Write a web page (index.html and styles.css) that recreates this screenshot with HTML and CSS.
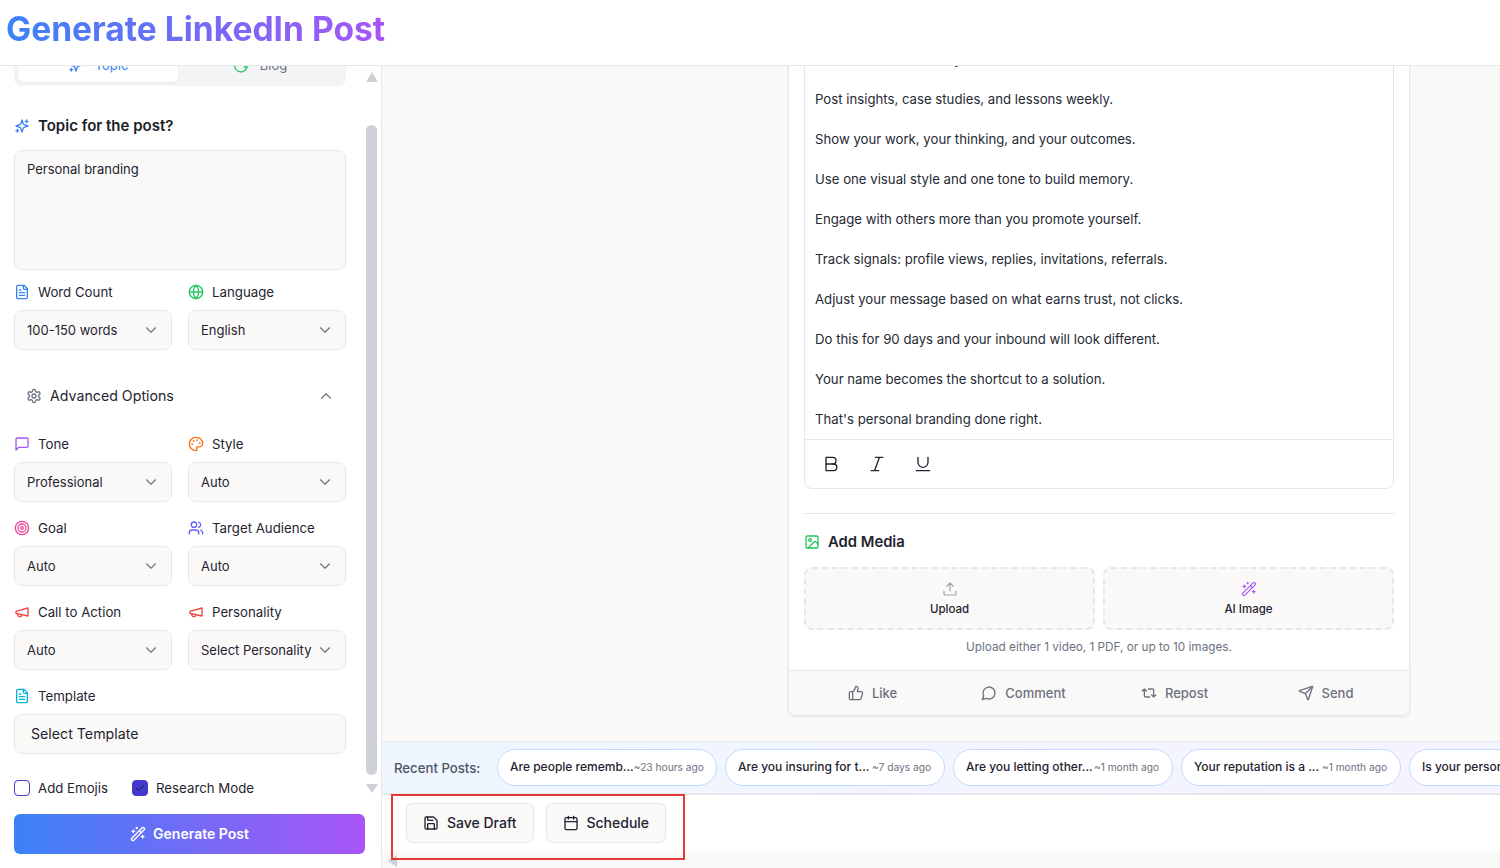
FILE: index.html
```html
<!DOCTYPE html>
<html lang="en">
<head>
<meta charset="utf-8">
<title>Generate LinkedIn Post</title>
<link rel="stylesheet" href="styles.css">
</head>
<body>
<svg class="sprite" xmlns="http://www.w3.org/2000/svg">
<symbol id="i-sparkles" viewBox="0 0 24 24"><g transform="translate(24 0) scale(-1 1)"><path d="m12 3-1.912 5.813a2 2 0 0 1-1.275 1.275L3 12l5.813 1.912a2 2 0 0 1 1.275 1.275L12 21l1.912-5.813a2 2 0 0 1 1.275-1.275L21 12l-5.813-1.912a2 2 0 0 1-1.275-1.275L12 3Z"/><path d="M5 3v4M19 17v4M3 5h4M17 19h4"/></g></symbol>
<symbol id="i-file" viewBox="0 0 24 24"><path d="M15 2H6a2 2 0 0 0-2 2v16a2 2 0 0 0 2 2h12a2 2 0 0 0 2-2V7Z"/><path d="M14 2v4a2 2 0 0 0 2 2h4M10 9H8M16 13H8M16 17H8"/></symbol>
<symbol id="i-globe" viewBox="0 0 24 24"><circle cx="12" cy="12" r="10"/><path d="M12 2a14.5 14.5 0 0 0 0 20 14.5 14.5 0 0 0 0-20M2 12h20"/></symbol>
<symbol id="i-gear" viewBox="0 0 24 24"><path d="M12.22 2h-.44a2 2 0 0 0-2 2v.18a2 2 0 0 1-1 1.73l-.43.25a2 2 0 0 1-2 0l-.15-.08a2 2 0 0 0-2.73.73l-.22.38a2 2 0 0 0 .73 2.73l.15.1a2 2 0 0 1 1 1.72v.51a2 2 0 0 1-1 1.74l-.15.09a2 2 0 0 0-.73 2.73l.22.38a2 2 0 0 0 2.73.73l.15-.08a2 2 0 0 1 2 0l.43.25a2 2 0 0 1 1 1.73V20a2 2 0 0 0 2 2h.44a2 2 0 0 0 2-2v-.18a2 2 0 0 1 1-1.73l.43-.25a2 2 0 0 1 2 0l.15.08a2 2 0 0 0 2.73-.73l.22-.39a2 2 0 0 0-.73-2.73l-.15-.08a2 2 0 0 1-1-1.74v-.5a2 2 0 0 1 1-1.74l.15-.09a2 2 0 0 0 .73-2.73l-.22-.38a2 2 0 0 0-2.73-.73l-.15.08a2 2 0 0 1-2 0l-.43-.25a2 2 0 0 1-1-1.73V4a2 2 0 0 0-2-2z"/><circle cx="12" cy="12" r="3"/></symbol>
<symbol id="i-message" viewBox="0 0 24 24"><path d="M21 15a2 2 0 0 1-2 2H7l-4 4V5a2 2 0 0 1 2-2h14a2 2 0 0 1 2 2z"/></symbol>
<symbol id="i-palette" viewBox="0 0 24 24"><circle cx="13.5" cy="6.5" r=".5"/><circle cx="17.5" cy="10.5" r=".5"/><circle cx="8.5" cy="7.5" r=".5"/><circle cx="6.5" cy="12.5" r=".5"/><path d="M12 2C6.5 2 2 6.5 2 12s4.5 10 10 10c.926 0 1.648-.746 1.648-1.688 0-.437-.18-.835-.437-1.125-.29-.289-.438-.652-.438-1.125a1.64 1.64 0 0 1 1.668-1.668h1.996c3.051 0 5.555-2.503 5.555-5.554C21.965 6.012 17.461 2 12 2z"/></symbol>
<symbol id="i-target" viewBox="0 0 24 24"><circle cx="12" cy="12" r="10"/><circle cx="12" cy="12" r="6"/><circle cx="12" cy="12" r="2"/></symbol>
<symbol id="i-users" viewBox="0 0 24 24"><path d="M16 21v-2a4 4 0 0 0-4-4H6a4 4 0 0 0-4 4v2"/><circle cx="9" cy="7" r="4"/><path d="M22 21v-2a4 4 0 0 0-3-3.87M16 3.13a4 4 0 0 1 0 7.75"/></symbol>
<symbol id="i-megaphone" viewBox="0 0 24 24"><path d="m3 11 18-5v12L3 14v-3z"/><path d="M11.6 16.8a3 3 0 1 1-5.8-1.6"/></symbol>
<symbol id="i-wand" viewBox="0 0 24 24"><path d="m21.64 3.64-1.28-1.28a1.21 1.21 0 0 0-1.72 0L2.36 18.64a1.21 1.21 0 0 0 0 1.72l1.28 1.28a1.2 1.2 0 0 0 1.72 0L21.64 5.36a1.2 1.2 0 0 0 0-1.72"/><path d="m14 7 3 3M5 6v4M19 14v4M10 2v2M7 8H3M21 16h-4M11 3H9"/></symbol>
<symbol id="i-check" viewBox="0 0 24 24"><path d="M20 6 9 17l-5-5"/></symbol>
<symbol id="i-save" viewBox="0 0 24 24"><path d="M15.2 3a2 2 0 0 1 1.4.6l3.8 3.8a2 2 0 0 1 .6 1.4V19a2 2 0 0 1-2 2H5a2 2 0 0 1-2-2V5a2 2 0 0 1 2-2z"/><path d="M17 21v-7a1 1 0 0 0-1-1H8a1 1 0 0 0-1 1v7M7 3v4a1 1 0 0 0 1 1h7"/></symbol>
<symbol id="i-calendar" viewBox="0 0 24 24"><path d="M8 2v4M16 2v4"/><rect x="3" y="4" width="18" height="18" rx="2"/><path d="M3 10h18"/></symbol>
<symbol id="i-thumb" viewBox="0 0 24 24"><path d="M7 10v12"/><path d="M15 5.88 14 10h5.83a2 2 0 0 1 1.92 2.56l-2.33 8A2 2 0 0 1 17.5 22H4a2 2 0 0 1-2-2v-8a2 2 0 0 1 2-2h2.76a2 2 0 0 0 1.79-1.11L12 2a3.13 3.13 0 0 1 3 3.88Z"/></symbol>
<symbol id="i-comment" viewBox="0 0 24 24"><path d="M7.9 20A9 9 0 1 0 4 16.1L2 22Z"/></symbol>
<symbol id="i-repeat" viewBox="0 0 24 24"><path d="m2 9 3-3 3 3M13 18H7a2 2 0 0 1-2-2V6M22 15l-3 3-3-3M11 6h6a2 2 0 0 1 2 2v10"/></symbol>
<symbol id="i-send" viewBox="0 0 24 24"><path d="M14.536 21.686a.5.5 0 0 0 .937-.024l6.5-19a.496.496 0 0 0-.635-.635l-19 6.5a.5.5 0 0 0-.024.937l7.93 3.18a2 2 0 0 1 1.112 1.11z"/><path d="m21.854 2.147-10.94 10.939"/></symbol>
<symbol id="i-upload" viewBox="0 0 24 24"><path d="M21 15v4a2 2 0 0 1-2 2H5a2 2 0 0 1-2-2v-4"/><path d="M17 8l-5-5-5 5M12 3v12"/></symbol>
<symbol id="i-image" viewBox="0 0 24 24"><rect x="3" y="3" width="18" height="18" rx="2"/><circle cx="9" cy="9" r="2"/><path d="m21 15-3.086-3.086a2 2 0 0 0-2.828 0L6 21"/></symbol>
<symbol id="i-bold" viewBox="0 0 24 24"><path d="M14 12a4 4 0 0 0 0-8H6v8"/><path d="M15 20a4 4 0 0 0 0-8H6v8Z"/></symbol>
<symbol id="i-italic" viewBox="0 0 24 24"><path d="M19 4h-9M14 20H5M15 4 9 20"/></symbol>
<symbol id="i-underline" viewBox="0 0 24 24"><path d="M6 4v6a6 6 0 0 0 12 0V4M4 20h16"/></symbol>
<symbol id="i-down" viewBox="0 0 24 24"><path d="m6 9 6 6 6-6"/></symbol>
<symbol id="i-up" viewBox="0 0 24 24"><path d="m18 15-6-6-6 6"/></symbol>
<symbol id="i-blog" viewBox="0 0 24 24"><path d="M21 15a9.5 9.5 0 1 1-1-7"/><path d="M21 15h-4"/></symbol>
</svg>

<header class="top"><h1 class="title">Generate LinkedIn Post</h1></header>

<div class="app">
  <aside class="side">
    <div class="side-scroll">
      <div class="form">
        <div class="tabs">
          <div class="tab tab-on"><svg class="ic c-blue"><use href="#i-sparkles"/></svg>Topic</div>
          <div class="tab"><svg class="ic c-green"><use href="#i-blog"/></svg>Blog</div>
        </div>

        <div class="topic-head"><svg class="ic c-blue"><use href="#i-sparkles"/></svg>Topic for the post?</div>
        <div class="textarea">Personal branding</div>

        <div class="grid first">
          <div class="field"><div class="label"><svg class="ic c-blue"><use href="#i-file"/></svg>Word Count</div><div class="select">100-150 words<svg class="chev"><use href="#i-down"/></svg></div></div>
          <div class="field"><div class="label"><svg class="ic c-green"><use href="#i-globe"/></svg>Language</div><div class="select">English<svg class="chev"><use href="#i-down"/></svg></div></div>
        </div>

        <div class="adv"><svg class="ic c-gray"><use href="#i-gear"/></svg><span class="adv-text">Advanced Options</span><svg class="chev"><use href="#i-up"/></svg></div>

        <div class="grid">
          <div class="field"><div class="label"><svg class="ic c-purple"><use href="#i-message"/></svg>Tone</div><div class="select">Professional<svg class="chev"><use href="#i-down"/></svg></div></div>
          <div class="field"><div class="label"><svg class="ic c-orange"><use href="#i-palette"/></svg>Style</div><div class="select">Auto<svg class="chev"><use href="#i-down"/></svg></div></div>
          <div class="field"><div class="label"><svg class="ic c-pink"><use href="#i-target"/></svg>Goal</div><div class="select">Auto<svg class="chev"><use href="#i-down"/></svg></div></div>
          <div class="field"><div class="label"><svg class="ic c-indigo"><use href="#i-users"/></svg>Target Audience</div><div class="select">Auto<svg class="chev"><use href="#i-down"/></svg></div></div>
          <div class="field"><div class="label"><svg class="ic c-red"><use href="#i-megaphone"/></svg>Call to Action</div><div class="select">Auto<svg class="chev"><use href="#i-down"/></svg></div></div>
          <div class="field"><div class="label"><svg class="ic c-red"><use href="#i-megaphone"/></svg>Personality</div><div class="select">Select Personality<svg class="chev"><use href="#i-down"/></svg></div></div>
          <div class="field wide"><div class="label"><svg class="ic c-cyan"><use href="#i-file"/></svg>Template</div><div class="select select-tpl">Select Template</div></div>
        </div>

        <div class="checks">
          <div class="check"><span class="box"></span>Add Emojis</div>
          <div class="check"><span class="box box-on"><svg class="tick"><use href="#i-check"/></svg></span>Research Mode</div>
        </div>
      </div>
      <div class="vbar">
        <span class="arrow-up"></span>
        <span class="thumb"></span>
        <span class="arrow-down"></span>
      </div>
    </div>
    <div class="gen-wrap">
      <div class="gen"><svg class="ic"><use href="#i-wand"/></svg>Generate Post</div>
    </div>
  </aside>

  <main class="main">
    <div class="canvas">
      <article class="card">
        <div class="inner">
          <div class="editor">
            <div class="copy">
              <p>Get clear, then act daily.</p>
              <p>Post insights, case studies, and lessons weekly.</p>
              <p>Show your work, your thinking, and your outcomes.</p>
              <p>Use one visual style and one tone to build memory.</p>
              <p>Engage with others more than you promote yourself.</p>
              <p>Track signals: profile views, replies, invitations, referrals.</p>
              <p>Adjust your message based on what earns trust, not clicks.</p>
              <p>Do this for 90 days and your inbound will look different.</p>
              <p>Your name becomes the shortcut to a solution.</p>
              <p>That's personal branding done right.</p>
            </div>
            <div class="toolbar">
              <svg class="fmt"><use href="#i-bold"/></svg>
              <svg class="fmt"><use href="#i-italic"/></svg>
              <svg class="fmt"><use href="#i-underline"/></svg>
            </div>
          </div>
          <div class="divider"></div>
          <div class="media-head"><svg class="ic c-emerald"><use href="#i-image"/></svg>Add Media</div>
          <div class="drops">
            <div class="drop"><svg class="drop-ic c-slate"><use href="#i-upload"/></svg>Upload</div>
            <div class="drop"><svg class="drop-ic c-purple2"><use href="#i-wand"/></svg>AI Image</div>
          </div>
          <p class="hint">Upload either 1 video, 1 PDF, or up to 10 images.</p>
        </div>
        <div class="social">
          <div class="act"><svg class="ic"><use href="#i-thumb"/></svg>Like</div>
          <div class="act"><svg class="ic"><use href="#i-comment"/></svg>Comment</div>
          <div class="act"><svg class="ic"><use href="#i-repeat"/></svg>Repost</div>
          <div class="act"><svg class="ic"><use href="#i-send"/></svg>Send</div>
        </div>
      </article>
    </div>

    <div class="recent">
      <span class="recent-label">Recent Posts:</span>
      <div class="chip"><span>Are people rememb...</span><small>~23 hours ago</small></div>
      <div class="chip"><span>Are you insuring for t...</span><small>~7 days ago</small></div>
      <div class="chip"><span>Are you letting other...</span><small>~1 month ago</small></div>
      <div class="chip"><span>Your reputation is a ...</span><small>~1 month ago</small></div>
      <div class="chip"><span>Is your personal bra...</span><small>~1 month ago</small></div>
    </div>

    <div class="actions">
      <div class="btn"><svg class="ic"><use href="#i-save"/></svg>Save Draft</div>
      <div class="btn"><svg class="ic"><use href="#i-calendar"/></svg>Schedule</div>
    </div>
    <div class="hbar"><span class="arrow-left"></span></div>
    <div class="annotation"></div>
  </main>
</div>
</body>
</html>
```

FILE: styles.css
```css
* { box-sizing: border-box; }
html, body { margin: 0; height: 100%; }
body {
  width: 1500px;
  height: 868px;
  overflow: hidden;
  background: #fff;
  color: #1f2430;
  font-family: Inter, "Liberation Sans", sans-serif;
  font-size: 13px;
  line-height: 20px;
}
p { margin: 0; }
.sprite { display: none; }
svg { display: block; flex: none; fill: none; stroke: currentColor; stroke-width: 2; stroke-linecap: round; stroke-linejoin: round; }

.top {
  height: 66px;
  padding: 9px 0 0 6px;
  background: #fff;
  border-bottom: 1px solid #e5e7eb;
}
.title {
  display: inline-block;
  margin: 0;
  font-size: 33.6px;
  line-height: 40px;
  font-weight: 700;
  background: linear-gradient(90deg, #3b82f6, #a855f7);
  -webkit-background-clip: text;
  background-clip: text;
  color: transparent;
}

.app { display: flex; height: 802px; }

.side {
  width: 382px;
  flex: none;
  border-right: 1px solid #e5e7eb;
  display: flex;
  flex-direction: column;
}
.side-scroll { height: 734px; display: flex; overflow: hidden; }
.form { width: 366px; flex: none; padding: 0 20px 0 14px; }

.ic { width: 16px; height: 16px; }
.c-blue { color: #3b82f6; }
.c-green { color: #22c55e; }
.c-gray { color: #6b7280; }
.c-purple { color: #a855f7; }
.c-orange { color: #f97316; }
.c-pink { color: #ec4899; }
.c-indigo { color: #6366f1; }
.c-red { color: #ef4444; }
.c-cyan { color: #06b6d4; }
.c-emerald { color: #22c55e; }
.c-slate { color: #9ca3af; }
.c-purple2 { color: #a855f7; }

.tabs {
  margin-top: -22px;
  height: 42px;
  padding: 4px;
  background: #f3f4f6;
  border-radius: 0 0 8px 8px;
  display: grid;
  grid-template-columns: 160px 1fr;
}
.tab {
  display: flex;
  align-items: center;
  justify-content: center;
  gap: 11px;
  font-size: 13px;
  color: #6b7280;
  border-radius: 6px;
}
.tab-on { background: #fff; color: #3b82f6; box-shadow: 0 1px 2px rgba(0,0,0,.05); }

.topic-head {
  margin-top: 30px;
  height: 20px;
  display: flex;
  align-items: center;
  gap: 8px;
  font-size: 15px;
  font-weight: 600;
  color: #1a1d26;
}
.textarea {
  margin-top: 14px;
  height: 120px;
  padding: 8px 12px;
  background: #faf9f8;
  border: 1px solid #e5e7eb;
  border-radius: 8px;
}

.grid { display: grid; grid-template-columns: 158px 158px; column-gap: 16px; row-gap: 16px; margin-top: 18px; }
.grid.first { margin-top: 12px; }
.wide { grid-column: 1 / -1; }
.label { height: 20px; display: flex; align-items: center; gap: 8px; margin-bottom: 8px; font-size: 13.25px; white-space: nowrap; }
.select {
  height: 40px;
  padding: 0 11px 0 12px;
  display: flex;
  align-items: center;
  justify-content: space-between;
  background: #faf9f8;
  border: 1px solid #e5e7eb;
  border-radius: 8px;
  white-space: nowrap;
}
.select-tpl { padding: 0 16px; font-size: 14.2px; }
.chev { width: 18px; height: 18px; color: #6b7280; stroke-width: 1.5; }

.adv {
  margin-top: 26px;
  height: 40px;
  padding: 0 11px 0 12px;
  display: flex;
  align-items: center;
  gap: 8px;
}
.adv-text { flex: 1; font-size: 14.2px; }

.checks { display: flex; gap: 24px; margin-top: 24px; }
.check { display: flex; align-items: center; gap: 8px; height: 20px; font-size: 13.25px; }
.box { width: 16px; height: 16px; border: 1px solid #4338ca; border-radius: 4px; background: #fff; display: flex; align-items: center; justify-content: center; }
.box-on { background: #4338ca; }
.tick { width: 12px; height: 12px; color: #111827; stroke-width: 1.75; }

.vbar { width: 12px; flex: none; padding-top: 6px; display: flex; flex-direction: column; align-items: flex-start; }
.arrow-up { width: 0; height: 0; border-left: 6px solid transparent; border-right: 6px solid transparent; border-bottom: 10px solid #cfd0d5; }
.thumb { width: 11px; height: 650px; margin-top: 43px; border-radius: 6px; background: #cfd0d5; }
.arrow-down { width: 0; height: 0; margin-top: 9px; border-left: 6px solid transparent; border-right: 6px solid transparent; border-top: 9px solid #cfd0d5; }

.gen-wrap { padding: 14px 16px 0 14px; }
.gen {
  height: 40px;
  border-radius: 6px;
  display: flex;
  align-items: center;
  justify-content: center;
  gap: 7px;
  color: #fff;
  font-size: 14px;
  font-weight: 600;
  background: linear-gradient(90deg, #3b82f6, #a855f7);
}

.main { flex: 1; min-width: 0; position: relative; display: flex; flex-direction: column; background: #faf9f8; }
.canvas { height: 675px; overflow: hidden; flex: none; }
.card {
  margin-left: 406px;
  margin-top: -25px;
  width: 622px;
  background: #fff;
  border: 1px solid #e5e7eb;
  border-radius: 0 0 8px 8px;
  box-shadow: 0 1px 3px rgba(0,0,0,.08);
}
.inner { padding: 0 15px; }
.editor { border: 1px solid #e5e7eb; border-top: 0; border-radius: 0 0 8px 8px; }
.copy { padding: 7px 10px 10px; font-size: 13.2px; color: #262a33; }
.copy p + p { margin-top: 20px; }
.toolbar { height: 49px; border-top: 1px solid #e5e7eb; padding: 0 16px; display: flex; align-items: center; gap: 26px; }
.fmt { width: 20px; height: 20px; color: #1f2430; stroke-width: 1.6; }

.divider { height: 1px; background: #e5e7eb; margin-top: 24px; }
.media-head { margin-top: 18px; height: 20px; display: flex; align-items: center; gap: 8px; font-size: 14.8px; font-weight: 600; }
.drops { margin-top: 15px; display: grid; grid-template-columns: 1fr 1fr; gap: 8px; }
.drop {
  height: 63px;
  border: 2px dashed #e5e7eb;
  border-radius: 8px;
  background: #faf9f8;
  display: flex;
  flex-direction: column;
  align-items: center;
  justify-content: center;
  gap: 4px;
  font-size: 11.5px;
  line-height: 16px;
  font-weight: 500;
}
.drop-ic { width: 16px; height: 16px; stroke-width: 1.75; }
.hint { margin: 7px 0 13px; text-align: center; font-size: 11.75px; line-height: 20px; color: #6b7280; }
.social {
  height: 45px;
  padding: 0 8px;
  border-top: 1px solid #e5e7eb;
  background: #faf9f8;
  border-radius: 0 0 8px 8px;
  display: grid;
  grid-template-columns: repeat(4, 1fr);
}
.act { display: flex; align-items: center; justify-content: center; gap: 8px; color: #6b7280; font-weight: 500; }

.recent {
  height: 54px;
  flex: none;
  padding-left: 12px;
  display: flex;
  align-items: center;
  gap: 8px;
  overflow: hidden;
  background: linear-gradient(90deg, #eff6ff, #f5f3ff);
  border-top: 1px solid #e5e7eb;
  border-bottom: 2px solid #e5e7eb;
}
.recent-label { width: 95px; flex: none; font-size: 13.2px; font-weight: 500; color: #4b5563; }
.chip {
  flex: none;
  width: 220px;
  height: 37px;
  padding: 0 13px 1px 12px;
  border: 1px solid #bfdbfe;
  border-radius: 19px;
  background: #fff;
  display: flex;
  align-items: center;
  justify-content: space-between;
  font-size: 12px;
  font-weight: 500;
  white-space: nowrap;
}
.chip small { font-size: 10.2px; font-weight: 400; color: #6b7280; }

.actions { height: 56px; flex: none; background: #fff; padding: 8px 0 0 24px; display: flex; gap: 12px; }
.btn {
  height: 40px;
  padding: 0 16px;
  display: flex;
  align-items: center;
  gap: 8px;
  background: #faf9f8;
  border: 1px solid #e5e7eb;
  border-radius: 6px;
  font-size: 14px;
  font-weight: 500;
}
.hbar { flex: 1; padding: 4px 0 0 6px; }
.arrow-left { display: block; width: 0; height: 0; border-top: 6px solid transparent; border-bottom: 6px solid transparent; border-right: 9px solid #cfd0d5; }

.annotation {
  position: absolute;
  left: 9px;
  top: 728px;
  width: 294px;
  height: 66px;
  border: 2px solid #e53935;
  pointer-events: none;
}
```
